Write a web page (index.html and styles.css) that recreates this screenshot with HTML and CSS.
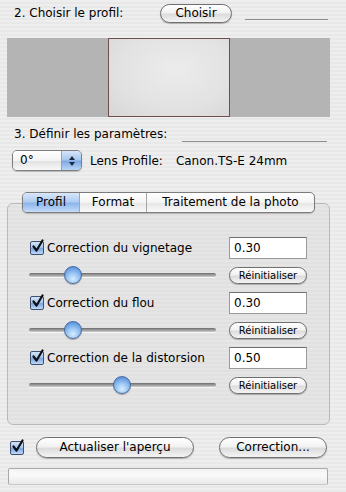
FILE: index.html
```html
<!DOCTYPE html>
<html lang="fr">
<head>
    <meta charset="UTF-8">
    <title>Correction de l'objectif</title>
    <link rel="stylesheet" href="styles.css">
</head>
<body>
    <div class="panel">
        <div class="head-row">
            <span class="head-label">2. Choisir le profil:</span>
            <button class="aqua choose">Choisir</button>
            <span class="rule rule-short"></span>
        </div>

        <div class="preview">
            <div class="frame"></div>
        </div>

        <div class="head-row second">
            <span>3. Définir les paramètres:</span>
            <span class="rule rule-long"></span>
        </div>

        <div class="popup-row">
            <div class="popup">
                <span class="popup-value">0°</span>
                <span class="popup-arrows">
                    <svg width="8" height="12" viewBox="0 0 8 12"><path d="M4 1 L7 5 L1 5 Z M4 11 L7 7 L1 7 Z" fill="#1a2a44"/></svg>
                </span>
            </div>
            <span class="lens-label">Lens Profile:</span>
            <span class="lens-name">Canon.TS-E 24mm</span>
        </div>

        <div class="tabbox">
            <div class="tabs">
                <span class="tab selected tab-profil">Profil</span>
                <span class="tab tab-format">Format</span>
                <span class="tab tab-photo">Traitement de la photo</span>
            </div>

            <div class="group">
                <div class="top-row">
                    <span class="check"><svg width="16" height="16" viewBox="0 0 16 16"><path d="M3.5 7.5 L6.5 11.5 L12.5 1.5" fill="none" stroke="#101010" stroke-width="2.2" stroke-linecap="round" stroke-linejoin="round"/></svg></span>
                    <span class="label">Correction du vignetage</span>
                    <span class="field">0.30</span>
                </div>
                <div class="bottom-row">
                    <div class="slider"><span class="knob" style="left: 23.5%"></span></div>
                    <button class="aqua small">Réinitialiser</button>
                </div>
            </div>

            <div class="group">
                <div class="top-row">
                    <span class="check"><svg width="16" height="16" viewBox="0 0 16 16"><path d="M3.5 7.5 L6.5 11.5 L12.5 1.5" fill="none" stroke="#101010" stroke-width="2.2" stroke-linecap="round" stroke-linejoin="round"/></svg></span>
                    <span class="label">Correction du flou</span>
                    <span class="field">0.30</span>
                </div>
                <div class="bottom-row">
                    <div class="slider"><span class="knob" style="left: 23.5%"></span></div>
                    <button class="aqua small">Réinitialiser</button>
                </div>
            </div>

            <div class="group">
                <div class="top-row">
                    <span class="check"><svg width="16" height="16" viewBox="0 0 16 16"><path d="M3.5 7.5 L6.5 11.5 L12.5 1.5" fill="none" stroke="#101010" stroke-width="2.2" stroke-linecap="round" stroke-linejoin="round"/></svg></span>
                    <span class="label">Correction de la distorsion</span>
                    <span class="field">0.50</span>
                </div>
                <div class="bottom-row">
                    <div class="slider"><span class="knob" style="left: 49.7%"></span></div>
                    <button class="aqua small">Réinitialiser</button>
                </div>
            </div>
        </div>

        <div class="action-row">
            <span class="check"><svg width="16" height="16" viewBox="0 0 16 16"><path d="M3.5 7.5 L6.5 11.5 L12.5 1.5" fill="none" stroke="#101010" stroke-width="2.2" stroke-linecap="round" stroke-linejoin="round"/></svg></span>
            <button class="aqua refresh">Actualiser l'aperçu</button>
            <button class="aqua correct">Correction...</button>
        </div>

        <div class="progress"></div>
    </div>
</body>
</html>
```
FILE: styles.css
```css
body {
    margin: 0;
    font-family: "DejaVu Sans", "Liberation Sans", sans-serif;
    font-size: 12px;
    color: #000;
    background: repeating-linear-gradient(to bottom, #eeeeee 0, #eeeeee 2px, #e8e8e8 2px, #e8e8e8 4px);
    height: 492px;
    overflow: hidden;
}
.panel {
    width: 323px;
    margin-left: 7px;
    padding-top: 3px;
}

/* section headings */
.head-row {
    display: flex;
    align-items: center;
    height: 20px;
    padding-left: 7px;
}
.head-label {
    width: 146px;
}
.rule {
    border-bottom: 1px solid #8e8e8e;
    height: 0;
    margin-top: 12px;
}
.rule-short {
    width: 83px;
    margin-left: 13px;
}
.rule-long {
    width: 145px;
    margin-left: auto;
    margin-right: 3px;
    margin-top: 14px;
}
.second {
    margin-top: 7px;
}

/* aqua buttons */
.aqua {
    font-family: inherit;
    font-size: 12px;
    color: #000;
    border: 1px solid #6f6f6f;
    border-radius: 11px;
    background: linear-gradient(to bottom, #ffffff 0%, #f2f2f2 45%, #dcdcdc 55%, #f4f4f4 100%);
    box-shadow: 0 1px 1px rgba(0, 0, 0, 0.25);
    padding: 0;
    height: 19px;
    line-height: 17px;
}
.choose {
    width: 72px;
}
.small {
    width: 78px;
    height: 17px;
    line-height: 15px;
    font-size: 10px;
    border-radius: 9px;
}
.refresh {
    width: 158px;
    height: 21px;
    margin-left: 12px;
}
.correct {
    width: 108px;
    height: 21px;
    margin-left: 25px;
}

/* preview strip */
.preview {
    margin-top: 15px;
    height: 79px;
    background: #b4b4b4;
    display: flex;
    justify-content: center;
}
.frame {
    width: 120px;
    border: 1px solid #6f5050;
    background: radial-gradient(ellipse at 55% 40%, #ececec 0%, #e2e2e2 60%, #d6d6d6 100%);
}

/* rotation popup */
.popup-row {
    display: flex;
    align-items: center;
    margin-top: 6px;
    height: 21px;
    padding-left: 5px;
}
.popup {
    width: 68px;
    height: 19px;
    border: 1px solid #7d7d7d;
    border-radius: 5px;
    display: flex;
    overflow: hidden;
    box-shadow: 0 1px 1px rgba(0, 0, 0, 0.2);
}
.popup-value {
    flex: 1;
    padding-left: 7px;
    line-height: 19px;
    background: linear-gradient(to bottom, #ffffff 0%, #f3f3f3 50%, #e2e2e2 55%, #f7f7f7 100%);
}
.popup-arrows {
    width: 19px;
    display: flex;
    align-items: center;
    justify-content: center;
    border-left: 1px solid #8ea4c6;
    background: linear-gradient(to bottom, #d6e5f8 0%, #a9c8ef 45%, #7fa9e3 55%, #b9d6f7 100%);
}
.lens-label {
    margin-left: 8px;
}
.lens-name {
    margin-left: 13px;
}

/* tab box */
.tabbox {
    margin-top: 32px;
    border: 1px solid #b9b9b9;
    border-radius: 6px;
    background: repeating-linear-gradient(to bottom, #e5e5e5 0, #e5e5e5 2px, #e1e1e1 2px, #e1e1e1 4px);
    height: 220px;
}
.tabs {
    display: flex;
    width: 291px;
    height: 19px;
    margin: -12px auto 0;
    border: 1px solid #7c7c7c;
    border-radius: 5px;
    overflow: hidden;
    background: linear-gradient(to bottom, #ffffff 0%, #f4f4f4 50%, #e6e6e6 55%, #fafafa 100%);
    box-shadow: 0 1px 1px rgba(0, 0, 0, 0.2);
}
.tab {
    line-height: 19px;
    text-align: center;
    border-left: 1px solid #a6a6a6;
}
.tab-profil {
    width: 56px;
    border-left: none;
}
.tab-format {
    width: 66px;
}
.tab-photo {
    flex: 1;
}
.tab.selected {
    background: linear-gradient(to bottom, #d9e7f9 0%, #b0cdf2 45%, #8cb6ec 55%, #c5dcf8 100%);
}

.group {
    padding: 0 22px;
    margin-top: 24px;
}
.group + .group {
    margin-top: 8px;
}
.top-row {
    display: flex;
    align-items: center;
    height: 22px;
}
.label {
    margin-left: 3px;
}
.field {
    margin-left: auto;
    width: 72px;
    height: 20px;
    line-height: 20px;
    padding-left: 4px;
    background: #fff;
    border: 1px solid #9a9a9a;
    border-top-color: #6e6e6e;
}
.bottom-row {
    display: flex;
    align-items: center;
    height: 18px;
    margin-top: 7px;
}
.slider {
    position: relative;
    width: 187px;
    height: 4px;
    margin-left: -1px;
    border-radius: 3px;
    background: linear-gradient(to bottom, #6d6d6d, #a4a4a4 60%, #cfcfcf);
    box-shadow: 0 1px 0 #f6f6f6;
}
.knob {
    position: absolute;
    top: -7px;
    width: 18px;
    height: 18px;
    margin-left: -9px;
    border-radius: 50%;
    border: 1px solid #4a6c9f;
    box-sizing: border-box;
    background: radial-gradient(circle at 50% 75%, #d8ecff 0%, #9cc7f4 40%, #5d95de 80%, #467fcc 100%);
    box-shadow: 0 1px 1px rgba(0, 0, 0, 0.3);
}
.bottom-row .small {
    margin-left: auto;
}

/* checkboxes */
.check {
    width: 14px;
    height: 14px;
    border: 1px solid #3e4f70;
    border-radius: 2px;
    box-sizing: border-box;
    background: linear-gradient(to bottom, #d3e3f8 0%, #a8c8f0 45%, #7aa6e2 55%, #c0d9f7 100%);
    position: relative;
    flex: none;
}
.check svg {
    position: absolute;
    left: -1px;
    top: -3px;
}

/* bottom actions */
.action-row {
    display: flex;
    align-items: center;
    margin-top: 12px;
    height: 21px;
    padding-left: 3px;
}
.progress {
    margin: 10px 2px 0 1px;
    height: 15px;
    border: 1px solid #a8a8a8;
    border-bottom-color: #c8c8c8;
    border-radius: 2px;
    background: linear-gradient(to bottom, #f3f3f3 0%, #fafafa 40%, #e9e9e9 100%);
}
```
